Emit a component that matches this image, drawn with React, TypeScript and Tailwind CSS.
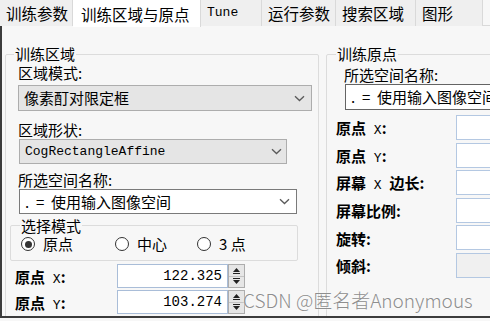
import React from "react"

const cjk = "font-['Noto_Sans_CJK_SC',sans-serif]"
const mono = "font-['Liberation_Mono',monospace]"

function Chevron() {
  return (
    <svg width="11" height="7" viewBox="0 0 11 7" className="shrink-0">
      <path d="M1 1.2l4.5 4.3L10 1.2" fill="none" stroke="#5a5a5a" strokeWidth="1.3" />
    </svg>
  )
}

function SpinButtons() {
  return (
    <div className="flex h-full w-[17px] flex-col border border-[#adadad] bg-[#e6e6e6]">
      <div className="flex flex-1 items-center justify-center border-b border-[#c4c4c4]">
        <svg width="9" height="7" viewBox="0 0 9 7">
          <path d="M4.5 1L8 5H1z" fill="#222" />
          <path d="M1 6.5h7" stroke="#222" strokeWidth="1" />
        </svg>
      </div>
      <div className="flex flex-1 items-center justify-center">
        <svg width="9" height="7" viewBox="0 0 9 7">
          <path d="M1 0.5h7" stroke="#222" strokeWidth="1" />
          <path d="M1 2h7L4.5 6z" fill="#222" />
        </svg>
      </div>
    </div>
  )
}

function Radio({ checked, label, width }: { checked?: boolean; label: string; width: string }) {
  return (
    <div className={`flex items-center ${width}`}>
      <span className="flex h-[14px] w-[14px] items-center justify-center rounded-full border border-[#333] bg-white">
        {checked && <span className="h-[7px] w-[7px] rounded-full bg-[#333]" />}
      </span>
      <span className="ml-[8px] text-[15px] leading-[18px]">{label}</span>
    </div>
  )
}

function AxisLabel({ pre, axis, post }: { pre: string; axis?: string; post?: string }) {
  return (
    <span className="whitespace-pre text-[15px] font-semibold leading-[18px]">
      {pre}
      {axis && <span className={`${mono} text-[13px] font-normal`}> {axis}{post ? " " : ""}</span>}
      {post}:
    </span>
  )
}

const tabs = [
  { label: "训练参数", w: "w-[73px]" },
  { label: "训练区域与原点", w: "w-[128px]", active: true },
  { label: "Tune", w: "w-[61px]", mono: true },
  { label: "运行参数", w: "w-[74px]" },
  { label: "搜索区域", w: "w-[80px]" },
  { label: "图形", w: "w-[67px]" },
]

export default function App() {
  return (
    <div className={`relative h-[321px] w-[490px] overflow-hidden bg-[#f7f7f7] text-black ${cjk}`}>
      {/* tab strip */}
      <div className="flex h-[26px] border-b border-[#d9d9d9] bg-[#f7f7f7]">
        {tabs.map((t) => (
          <div
            key={t.label}
            className={`flex h-[26px] shrink-0 items-center border-r border-[#d9d9d9] ${t.w} ${
              t.active ? "h-[27px] bg-white pl-[8px]" : "bg-[#efefef] pl-[6px]"
            } ${t.label === "训练参数" ? "pl-[1px]" : ""}`}
          >
            {t.mono ? (
              <span className={`${mono} text-[13px] leading-[18px]`}>{t.label}</span>
            ) : (
              <span className="text-[15.5px] leading-[18px]">{t.label}</span>
            )}
          </div>
        ))}
      </div>

      {/* page body */}
      <div className="flex h-[292px] overflow-hidden border-b-2 border-l-2 border-[#3c3c3c] bg-[#f7f7f7]">
        {/* 训练区域 */}
        <fieldset className="ml-[3px] mt-[19px] h-[320px] w-[314px] shrink-0 rounded-[2px] border border-[#dcdcdc]">
          <legend className="ml-[8px] px-[1px] text-[15px] leading-[18px]">训练区域</legend>

          <div className="ml-[12px] mt-[1px] text-[15px] leading-[18px]">区域模式:</div>
          <div className="ml-[12px] mt-[3px] flex h-[26px] w-[294px] items-center justify-between border border-[#adadad] bg-[#e5e5e5] pl-[5px] pr-[6px]">
            <span className="text-[15px] leading-[18px]">像素酊对限定框</span>
            <Chevron />
          </div>

          <div className="ml-[12px] mt-[10px] text-[15px] leading-[18px]">区域形状:</div>
          <div className="ml-[13px] flex h-[25px] w-[268px] items-center justify-between border border-[#adadad] bg-[#e5e5e5] pl-[5px] pr-[4px]">
            <span className={`${mono} text-[13px] font-medium leading-[18px]`}>CogRectangleAffine</span>
            <Chevron />
          </div>

          <div className="ml-[12px] mt-[7px] text-[15px] leading-[18px]">所选空间名称:</div>
          <div className="ml-[13px] flex h-[25px] w-[278px] items-center justify-between border border-[#7a7a7a] bg-white pl-[5px] pr-[6px]">
            <span className="whitespace-pre text-[15px] leading-[18px]">.  =  使用输入图像空间</span>
            <Chevron />
          </div>

          <fieldset className="ml-[4px] mt-[3px] w-[288px] rounded-[2px] border border-[#dcdcdc] pb-[7px]">
            <legend className="ml-[9px] px-[1px] text-[15px] leading-[17px]">选择模式</legend>
            <div className="ml-[10px] mt-px flex h-[18px] items-center">
              <Radio checked label="原点" width="w-[94px]" />
              <Radio label="中心" width="w-[82px]" />
              <Radio label="3 点" width="w-[80px]" />
            </div>
          </fieldset>

          <div className="mt-[3px] flex flex-col gap-[2px]">
            {[
              { axis: "X", value: "122.325" },
              { axis: "Y", value: "103.274" },
              { axis: "", value: "" },
            ].map((r, i) => (
              <div key={i} className="flex h-[24px] items-center">
                <div className="ml-[9px] w-[102px]">{r.axis && <AxisLabel pre="原点" axis={r.axis} />}</div>
                <div className="flex h-full w-[111px] items-center justify-end border border-[#a9bdd8] bg-white pr-[5px]">
                  <span className={`${mono} text-[14px] leading-[18px]`}>{r.value}</span>
                </div>
                <SpinButtons />
              </div>
            ))}
          </div>
        </fieldset>

        {/* 训练原点 */}
        <fieldset className="ml-[7px] mt-[19px] h-[320px] w-[200px] shrink-0 rounded-[2px] border border-[#dcdcdc]">
          <legend className="ml-[9px] px-[1px] text-[15px] leading-[18px]">训练原点</legend>
          <div className="ml-[17px] mt-[3px] text-[15px] leading-[18px]">所选空间名称:</div>
          <div className="ml-[18px] flex h-[26px] w-[170px] items-center overflow-hidden whitespace-nowrap border border-[#646464] bg-white pl-[5px]">
            <span className="whitespace-pre text-[15px] leading-[18px]">.  =  使用输入图像空间</span>
          </div>

          <div className="mt-[5px] flex flex-col gap-[2.6px]">
            {[
              { pre: "原点", axis: "X" },
              { pre: "原点", axis: "Y" },
              { pre: "屏幕", axis: "X", post: "边长" },
              { pre: "屏幕比例" },
              { pre: "旋转" },
              { pre: "倾斜", disabled: true },
            ].map((r, i) => (
              <div key={i} className="flex h-[25px] items-center">
                <div className="ml-[9px] w-[120px]">
                  <AxisLabel pre={r.pre} axis={r.axis} post={r.post} />
                </div>
                <div
                  className={`h-full flex-1 border border-[#b4c8e2] ${r.disabled ? "bg-[#f0f0f0]" : "bg-white"}`}
                />
              </div>
            ))}
          </div>
        </fieldset>
      </div>

      {/* watermark */}
      <div className="pointer-events-none absolute left-[243px] top-[288px] whitespace-nowrap text-[19px] font-light leading-[24px] text-[#8e8e8e] [text-shadow:0_0_2px_#fff]">
        CSDN @匿名者Anonymous
      </div>
    </div>
  )
}
